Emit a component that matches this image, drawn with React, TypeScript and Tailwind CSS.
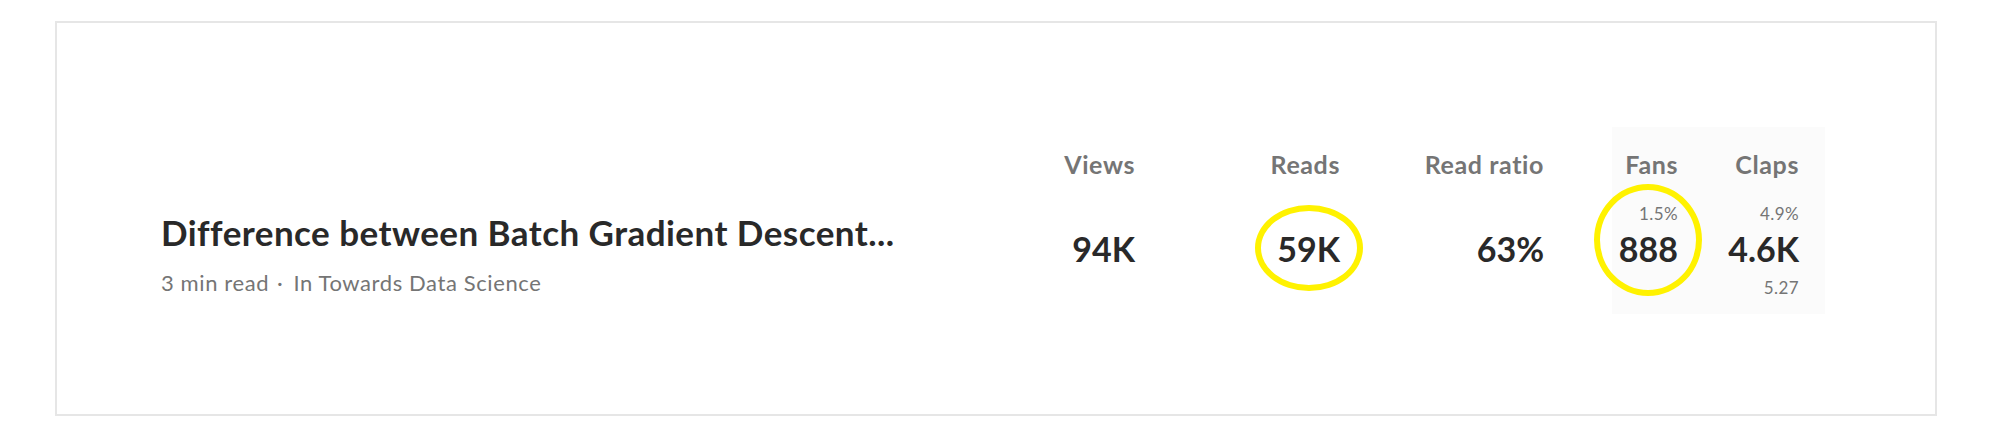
import React from 'react';

type Stat = {
  label: string;
  value: string;
  top?: string;
  bottom?: string;
  width: string;
};

const font = { fontFamily: 'Lato, "Noto Sans", sans-serif' };

function StatColumn({ stat, circle }: { stat: Stat; circle?: React.ReactNode }) {
  return (
    <div className={`flex flex-col items-end text-right ${stat.width}`}>
      <div className="h-[28px] text-[25px] leading-[28px] font-bold tracking-[0.6px] text-[#757575]">{stat.label}</div>
      <div className="mt-[26px] h-[20px] text-[17px] leading-[20px] tracking-[0.4px] text-[#757575]">{stat.top}</div>
      <div className="relative mt-[5px] h-[40px] text-[34px] leading-[40px] font-bold text-[#292929]">
        {stat.value}
        {circle}
      </div>
      <div className="mt-[9px] h-[20px] text-[17px] leading-[20px] tracking-[0.4px] text-[#757575]">{stat.bottom}</div>
    </div>
  );
}

export default function App() {
  return (
    <div className="w-[2000px] h-[445px] bg-white pt-[21px] pl-[55px]" style={font}>
      <div className="w-[1882px] h-[395px] border-2 border-[#e6e6e6] flex items-start pt-[104px] pl-[104px] pr-[110px]">
        <div className="flex-1 mt-[83px]">
          <h2 className="text-[35px] leading-[44px] font-bold tracking-[0.45px] text-[#292929]">
            Difference between Batch Gradient Descent...
          </h2>
          <p className="mt-[15px] text-[22px] leading-[28px] tracking-[0.6px] text-[#757575]">
            <span>3 min read</span>
            <span className="ml-[8px] mr-[10px]">·</span>
            <span>In Towards Data Science</span>
          </p>
        </div>
        <div className="flex items-start">
          <div className="mt-[23px] flex items-start">
            <StatColumn stat={{ label: 'Views', value: '94K', width: 'w-[140px]' }} />
            <StatColumn
              stat={{ label: 'Reads', value: '59K', width: 'w-[205px]' }}
              circle={
                <span className="absolute top-[-24px] right-[-23px] w-[108px] h-[86px] rounded-[50%] border-[6px] border-[#fff200]" />
              }
            />
            <StatColumn stat={{ label: 'Read ratio', value: '63%', width: 'w-[204px]' }} />
          </div>
          <div className="ml-[68px] flex items-start bg-[#fbfbfb] pt-[23px] pb-[16px] pr-[26px]">
            <StatColumn
              stat={{ label: 'Fans', value: '888', top: '1.5%', width: 'w-[66px]' }}
              circle={
                <span className="absolute top-[-45px] right-[-24px] w-[108px] h-[112px] rounded-[50%] border-[6px] border-[#fff200]" />
              }
            />
            <StatColumn stat={{ label: 'Claps', value: '4.6K', top: '4.9%', bottom: '5.27', width: 'w-[121px]' }} />
          </div>
        </div>
      </div>
    </div>
  );
}
